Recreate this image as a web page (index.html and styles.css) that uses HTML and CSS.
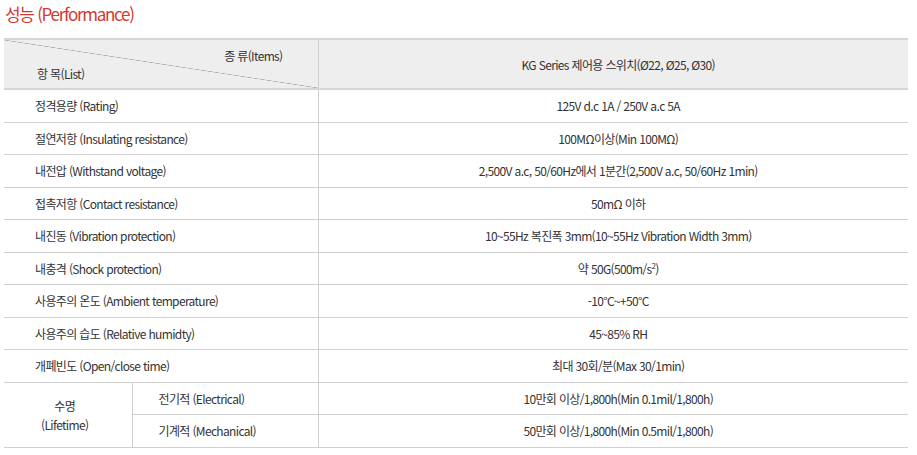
FILE: index.html
```html
<!DOCTYPE html>
<html lang="ko">
<head>
<meta charset="utf-8">
<link rel="stylesheet" href="styles.css">
</head>
<body>
<h2 class="title">성능 (Performance)</h2>
<table class="spec">
  <colgroup>
    <col class="c1"><col class="c2"><col class="c3">
  </colgroup>
  <thead>
    <tr class="head">
      <th colspan="2" class="diag">
        <span class="items">종 류(Items)</span>
        <span class="list">항 목(List)</span>
      </th>
      <th class="val">KG Series 제어용 스위치(Ø22, Ø25, Ø30)</th>
    </tr>
  </thead>
  <tbody>
    <tr><td colspan="2" class="lbl">정격용량 (Rating)</td><td class="val">125V d.c 1A / 250V a.c 5A</td></tr>
    <tr><td colspan="2" class="lbl">절연저항 (Insulating resistance)</td><td class="val">100MΩ이상(Min 100MΩ)</td></tr>
    <tr><td colspan="2" class="lbl">내전압 (Withstand voltage)</td><td class="val">2,500V a.c, 50/60Hz에서 1분간(2,500V a.c, 50/60Hz 1min)</td></tr>
    <tr><td colspan="2" class="lbl">접촉저항 (Contact resistance)</td><td class="val">50mΩ 이하</td></tr>
    <tr><td colspan="2" class="lbl">내진동 (Vibration protection)</td><td class="val">10~55Hz 복진폭 3mm(10~55Hz Vibration Width 3mm)</td></tr>
    <tr><td colspan="2" class="lbl">내충격 (Shock protection)</td><td class="val">약 50G(500m/s<sup>2</sup>)</td></tr>
    <tr><td colspan="2" class="lbl">사용주의 온도 (Ambient temperature)</td><td class="val">-10°C~+50°C</td></tr>
    <tr><td colspan="2" class="lbl">사용주의 습도 (Relative humidty)</td><td class="val">45~85% RH</td></tr>
    <tr><td colspan="2" class="lbl">개폐빈도 (Open/close time)</td><td class="val">최대 30회/분(Max 30/1min)</td></tr>
    <tr><td rowspan="2" class="life">수명<br>(Lifetime)</td><td class="sub">전기적 (Electrical)</td><td class="val">10만회 이상/1,800h(Min 0.1mil/1,800h)</td></tr>
    <tr><td class="sub">기계적 (Mechanical)</td><td class="val">50만회 이상/1,800h(Min 0.5mil/1,800h)</td></tr>
  </tbody>
</table>
</body>
</html>
```

FILE: styles.css
```css
html, body {
  margin: 0;
  padding: 0;
  background: #ffffff;
}
body {
  padding: 0 9px 0 4px;
  font-family: "Noto Sans CJK KR", "Noto Sans", sans-serif;
  color: #333333;
}
.title {
  margin: 0 0 0 1px;
  height: 38px;
  line-height: 28px;
  font-size: 17px;
  font-weight: 400;
  letter-spacing: -1.3px;
  color: #d4382f;
}
.spec {
  width: 904px;
  border-collapse: collapse;
  table-layout: fixed;
  font-size: 12px;
  letter-spacing: -0.65px;
  border-top: 2px solid #d6d6d6;
}
.c1 { width: 128px; }
.c2 { width: 186px; }
.c3 { width: 590px; }
.spec th, .spec td {
  font-weight: 400;
  padding: 0;
  border-bottom: 1px solid #d0d0d0;
  height: 31.5px;
  vertical-align: middle;
}
.head th {
  background: #eeeeee;
  height: 48px;
  border-bottom: 2px solid #d6d6d6;
}
.diag {
  position: relative;
  border-right: 1px solid #cfcfcf;
  background: #eeeeee linear-gradient(to top right, transparent calc(50% - 0.6px), #a8a8a8 50%, transparent calc(50% + 0.6px)) !important;
}
.items {
  position: absolute;
  right: 35px;
  top: 7px;
}
.list {
  position: absolute;
  left: 33px;
  top: 25px;
}
.lbl {
  padding-left: 31px !important;
  border-right: 1px solid #cfcfcf;
  text-align: left;
}
.val {
  text-align: center;
  padding-left: 10px !important;
}
.life {
  text-align: center;
  line-height: 19px;
  padding-right: 6px !important;
  border-right: 1px solid #cfcfcf;
}
.sub {
  padding-left: 26px !important;
  border-right: 1px solid #cfcfcf;
}
sup {
  font-size: 8px;
  vertical-align: 5px;
  line-height: 0;
}
```
